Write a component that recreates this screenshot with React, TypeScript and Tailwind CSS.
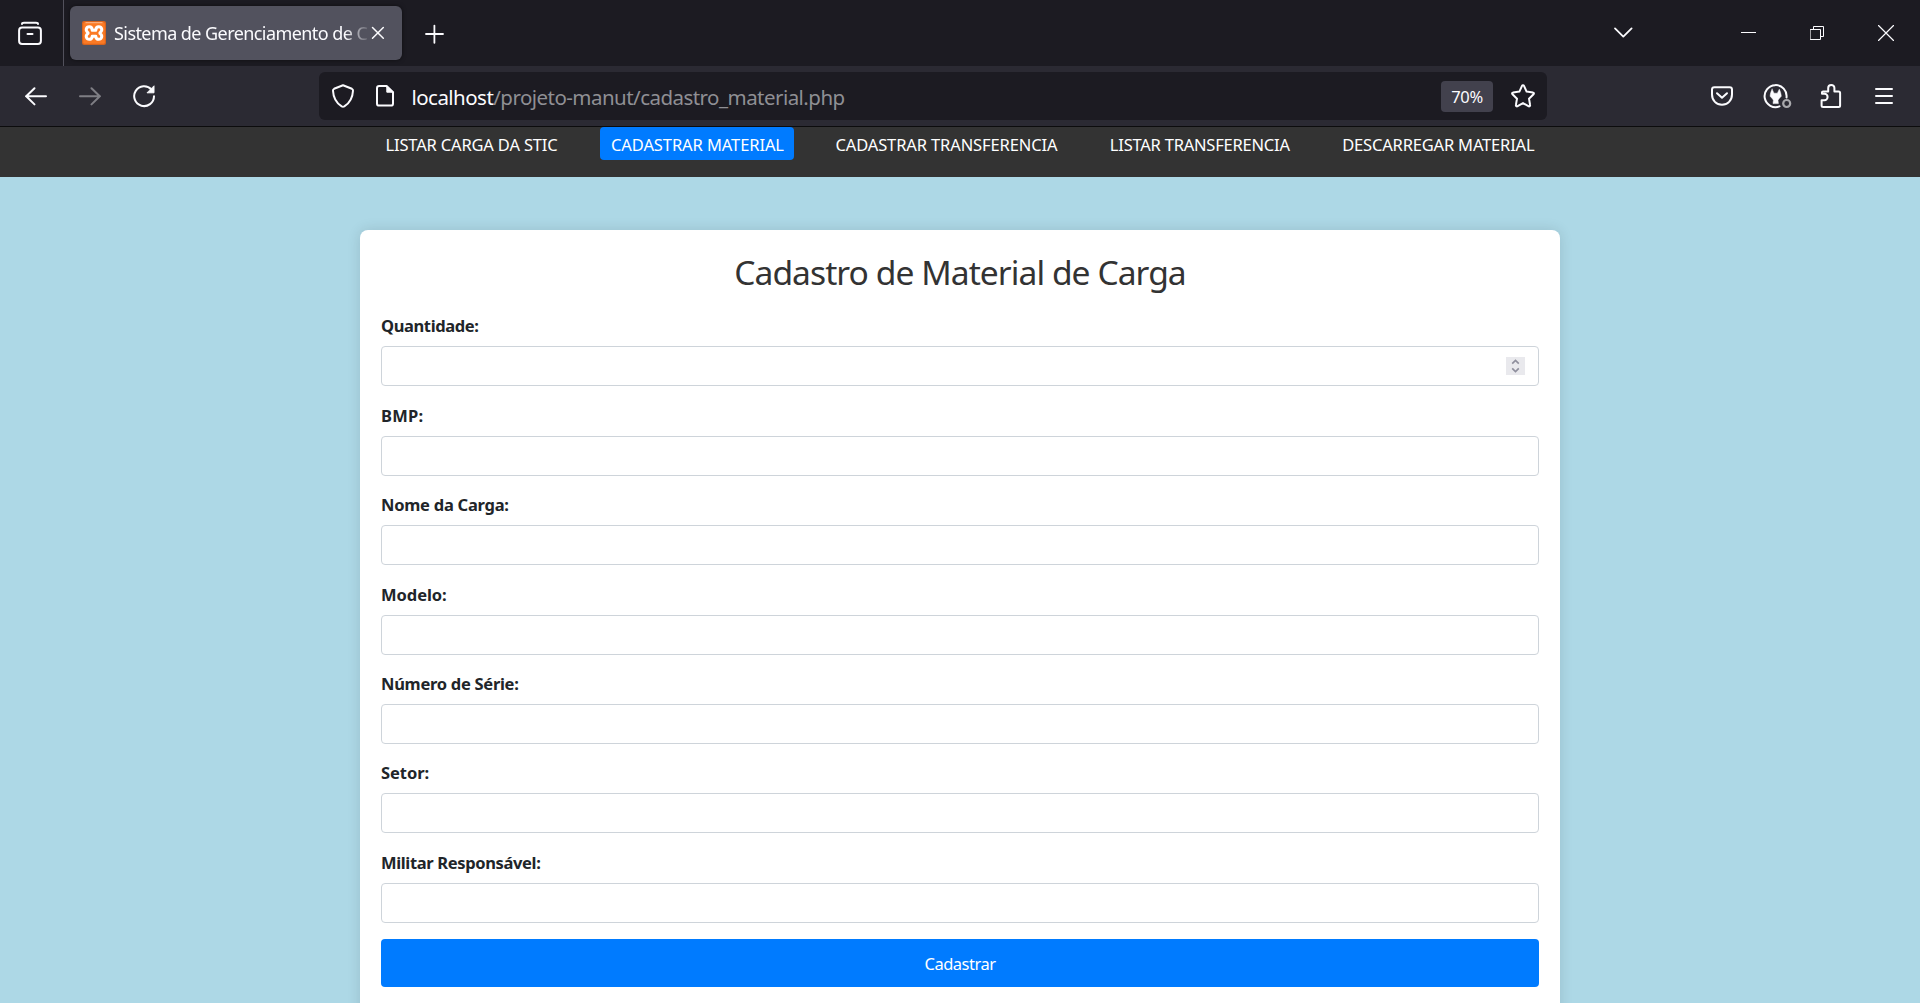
import type { ReactNode } from 'react';

type IconProps = { w: number; h: number; className?: string; children: ReactNode };

function Icon({ w, h, className = '', children }: IconProps) {
  return (
    <svg
      width={w}
      height={h}
      viewBox={`0 0 ${w} ${h}`}
      fill="none"
      stroke="#fbfbfe"
      strokeWidth={2}
      strokeLinecap="round"
      strokeLinejoin="round"
      className={`block shrink-0 ${className}`}
    >
      {children}
    </svg>
  );
}

function TabStrip() {
  return (
    <div className="flex h-[66px] shrink-0 bg-[#1c1b22]">
      <div className="flex w-[64px] justify-center border-r border-[#52515c] pr-[4px] pt-[21px]">
        <Icon w={26} h={26}>
          <path d="M5 3C5 2 6 1.8 7 1.8h12c1 0 2 .4 2 1.2" />
          <rect x="2.1" y="6.6" width="21.8" height="16.4" rx="3" />
          <path d="M10.5 13h5" />
        </Icon>
      </div>

      <div className="mb-[6px] ml-[6px] mt-[6px] flex w-[332px] items-center rounded-[6px] bg-[#52525e] pl-[12px] shadow-[0_0_4px_rgba(0,0,0,0.5)]">
        <svg width="24" height="24" viewBox="0 0 24 24" className="block shrink-0">
          <rect width="24" height="24" rx="2" fill="#d9641d" />
          <rect x="1.2" y="1.2" width="21.6" height="21.6" rx="1.5" fill="#fb7a24" />
          <path d="M3.5 1.7h17" stroke="#fdb98c" strokeWidth="1" />
          <path
            d="M10.2 9.2C10.2 6.8 8.8 5.7 7.2 5.7 4.2 5.7 3.2 9.4 5.6 11.2c.7.5.7 1.2 0 1.7C3.2 14.8 4.3 18.3 7.2 18.3c2.1 0 2.9-1.4 3-3h3.6c.1 1.6.9 3 3 3 2.9 0 4-3.5 1.6-5.4-.7-.5-.7-1.2 0-1.7 2.4-1.8 1.4-5.500-1.600-5.500-1.600 0-3 1.100-3 3.500z"
            fill="none"
            stroke="#fff"
            strokeWidth="3"
            strokeLinejoin="round"
          />
        </svg>
        <div className="ml-[7px] h-[30px] w-[258px] whitespace-nowrap pl-[1px] text-[18px] leading-[30px] tracking-[-0.57px] text-[#fbfbfe] [mask-image:linear-gradient(to_right,black_calc(100%-26px),transparent)]">
          Sistema de Gerenciamento de C
        </div>
        <Icon w={14} h={14}>
          <path d="M1.5 1.5 12.3 12.3M12.3 1.5 1.5 12.3" strokeWidth="1.5" />
        </Icon>
      </div>

      <Icon w={20} h={20} className="ml-[22px] mt-[24px]">
        <path d="M10.4 1.6v17.2M2 10h17" strokeWidth="1.8" />
      </Icon>

      <Icon w={20} h={14} className="ml-auto mt-[26px]">
        <path d="M2 2.4 10.3 10.6 18.6 2.4" strokeWidth="1.8" />
      </Icon>
      <Icon w={15} h={1} className="ml-[108px] mt-[32px]">
        <path d="M0 .5h15" strokeWidth="1" strokeLinecap="butt" />
      </Icon>
      <Icon w={14} h={14} className="ml-[54px] mt-[26px]">
        <path d="M.5 3.5h10v10H.5zM3.5 3.5V.5h10v10h-3" strokeWidth="1" strokeLinejoin="miter" />
      </Icon>
      <Icon w={16} h={16} className="ml-[54px] mr-[26px] mt-[25px]">
        <path d="M.5.5l15 15M15.5.5l-15 15" strokeWidth="1.2" />
      </Icon>
    </div>
  );
}

function Toolbar() {
  return (
    <div className="flex h-[61px] shrink-0 items-center border-b border-[#0c0c0d] bg-[#2b2a33]">
      <Icon w={24} h={20} className="ml-[24px]">
        <path d="M2 10.3h20M10.5 2.2 2.2 10.3l8.3 8.1" />
      </Icon>
      <Icon w={24} h={20} className="ml-[30px] opacity-40">
        <path d="M2 10.3h20M13.5 2.2l8.3 8.1-8.3 8.1" />
      </Icon>
      <Icon w={24} h={24} className="ml-[30px]">
        <path d="M19.5 5.6A9.9 9.9 0 1 0 22 12.2" />
        <path d="M22 2.2v6.6h-6.6z" fill="#fbfbfe" strokeWidth="1" />
      </Icon>

      <div className="ml-[163px] flex h-[48px] w-[1228px] items-center rounded-[6px] bg-[#1c1b22] pl-[12px]">
        <Icon w={24} h={26}>
          <path d="M12 2.2 20.9 5.8c.9.4 1.2 1 1.1 1.9-.3 6.2-3.6 12.5-8.7 15.7-.9.5-1.7.5-2.6 0C5.6 20.2 2.3 13.9 2 7.7c-.1-.9.2-1.5 1.1-1.9z" />
        </Icon>
        <Icon w={20} h={24} className="ml-[20px]">
          <path d="M11.5 2H4.2C2.9 2 2 2.9 2 4.2v15.2c0 1.3.9 2.2 2.2 2.2h11.6c1.3 0 2.2-.9 2.2-2.2V8.2z" />
          <path d="M11.8 2v6.2H18z" fill="#fbfbfe" strokeWidth="1" />
        </Icon>
        <div className="ml-[16.5px] whitespace-nowrap pt-[2px] text-[20.5px] leading-[30px] tracking-[-0.54px] text-[#8f8f94]">
          <span className="text-[#fbfbfe]">localhost</span>/projeto-manut/cadastro_material.php
        </div>
        <div className="ml-auto mr-[17px] flex h-[31px] w-[52px] items-center justify-center rounded-[4px] bg-[#42414d] pt-px text-[16.5px] leading-[29px] tracking-[-0.3px] text-[#fbfbfe]">
          70%
        </div>
        <Icon w={26} h={26} className="mr-[11px]">
          <path d="M12 2.9c.4-.9 1.6-.9 2 0l2.6 5.7 6.3.8c1 .1 1.3 1.2.6 1.9l-4.5 4.4 1.1 6.3c.2 1-.8 1.7-1.7 1.2L13 20.1l-5.4 3.1c-.9.5-1.9-.2-1.7-1.2L7 15.7l-4.5-4.4c-.7-.7-.4-1.8.6-1.9l6.3-.8z" />
        </Icon>
      </div>

      <Icon w={24} h={22} className="ml-auto">
        <path d="M4.4 2.2h15.2c1.4 0 2.4 1 2.4 2.4v4.9c0 5.8-4.4 10.3-10 10.3S2 15.3 2 9.5V4.6c0-1.4 1-2.4 2.4-2.4z" />
        <path d="M7 8.2 12 12.8 17 8.2" />
      </Icon>
      <Icon w={30} h={26} className="ml-[29px]">
        <path d="M23.5 14.5A11 11 0 1 0 16.5 23.4" />
        <path
          d="M9.1 6.2 11 10.2h3.4L16.3 6.2c1 2 1.8 4.400 2 7l-2.500 2.800-.8 1.200.4 3.400H10l.4-3.400-.8-1.200-2.500-2.800c.2-2.600 1-5 2-7z"
          fill="#fbfbfe"
          strokeWidth=".5"
        />
        <circle cx="23.7" cy="20.5" r="3.5" stroke="#a9a9ad" strokeWidth="2.2" />
      </Icon>
      <Icon w={24} h={26} className="ml-[26px]">
        <path d="M3 9.3V10.8h2.4a3 3 0 0 1 0 6.4H2.6v5.2c0 .9.6 1.5 1.5 1.5h15.5c.9 0 1.5-.6 1.5-1.5V10c0-.9-.6-1.5-1.5-1.5h-4.2V5a3.1 3.1 0 0 0-6.2 0v3.5H4.1c-.6 0-1.1.3-1.1.8z" />
      </Icon>
      <Icon w={20} h={18} className="ml-[31px] mr-[26px]">
        <path d="M2 2h16M2 9h16M2 16h16" />
      </Icon>
    </div>
  );
}

const links = [
  { label: 'LISTAR CARGA DA STIC', spacing: 'tracking-[-0.17px]' },
  { label: 'CADASTRAR MATERIAL', spacing: 'tracking-[-0.09px]', active: true },
  { label: 'CADASTRAR TRANSFERENCIA', spacing: 'tracking-[-0.12px]' },
  { label: 'LISTAR TRANSFERENCIA', spacing: 'tracking-[-0.22px]' },
  { label: 'DESCARREGAR MATERIAL', spacing: 'tracking-[-0.18px]' },
];

function NavBar() {
  return (
    <nav className="flex h-[50px] shrink-0 items-start justify-center gap-[31.5px] bg-[#333333]">
      {links.map((link) => (
        <a
          key={link.label}
          className={`h-[33px] whitespace-nowrap rounded-[4px] px-[10.5px] pt-[1px] text-[16.5px] leading-[33px] text-white ${link.spacing} ${link.active ? '-mr-px ml-px bg-[#007bff]' : ''}`}
        >
          {link.label}
        </a>
      ))}
    </nav>
  );
}

const fields = [
  { label: 'Quantidade:', spacing: 'tracking-[-0.38px]', stepper: true },
  { label: 'BMP:', spacing: 'tracking-[0.2px]' },
  { label: 'Nome da Carga:', spacing: 'tracking-[-0.25px]' },
  { label: 'Modelo:', spacing: 'tracking-[-0.05px]' },
  { label: 'Número de Série:', spacing: 'tracking-[-0.28px]' },
  { label: 'Setor:', spacing: 'tracking-[-0.05px]' },
  { label: 'Militar Responsável:', spacing: 'tracking-[-0.35px]' },
];

function Stepper() {
  return (
    <div className="flex h-[18px] w-[19px] items-center justify-center bg-[#e9e9ed]">
      <svg width="9" height="14" viewBox="0 0 9 14" fill="none" stroke="#8f8f9d" strokeWidth="1.7">
        <path d="M1.2 4.6 4.5 1.5l3.3 3.1M1.2 9.4l3.3 3.1 3.3-3.1" />
      </svg>
    </div>
  );
}

export default function App() {
  return (
    <div className="flex h-screen flex-col overflow-hidden bg-[#add8e6] font-['Noto_Sans',sans-serif]">
      <TabStrip />
      <Toolbar />
      <NavBar />
      <main className="mt-[53px] flex h-[800px] w-[1200px] shrink-0 flex-col self-center rounded-[8px] bg-white px-[21px] pt-[22px] shadow-[0_0_14px_rgba(0,0,0,0.12)]">
        <h1 className="mb-[21.3px] h-[40px] text-center text-[33.6px] leading-[40px] tracking-[-0.94px] text-[#333333]">
          Cadastro de Material de Carga
        </h1>
        <div className="flex flex-col gap-[16.42px]">
          {fields.map((field) => (
            <div key={field.label} className="flex flex-col gap-2">
              <label className={`h-[25px] text-[16.5px] font-bold leading-[25px] text-[#212529] ${field.spacing}`}>
                {field.label}
              </label>
              <div className="flex h-[40px] items-center justify-end rounded-[4px] border border-[#ced4da] bg-white pr-[13px]">
                {field.stepper && <Stepper />}
              </div>
            </div>
          ))}
        </div>
        <button className="mt-[16.2px] h-[48px] shrink-0 rounded-[4px] bg-[#007bff] pt-[2px] text-[16.5px] leading-[46px] tracking-[-0.5px] text-white">
          Cadastrar
        </button>
      </main>
    </div>
  );
}
